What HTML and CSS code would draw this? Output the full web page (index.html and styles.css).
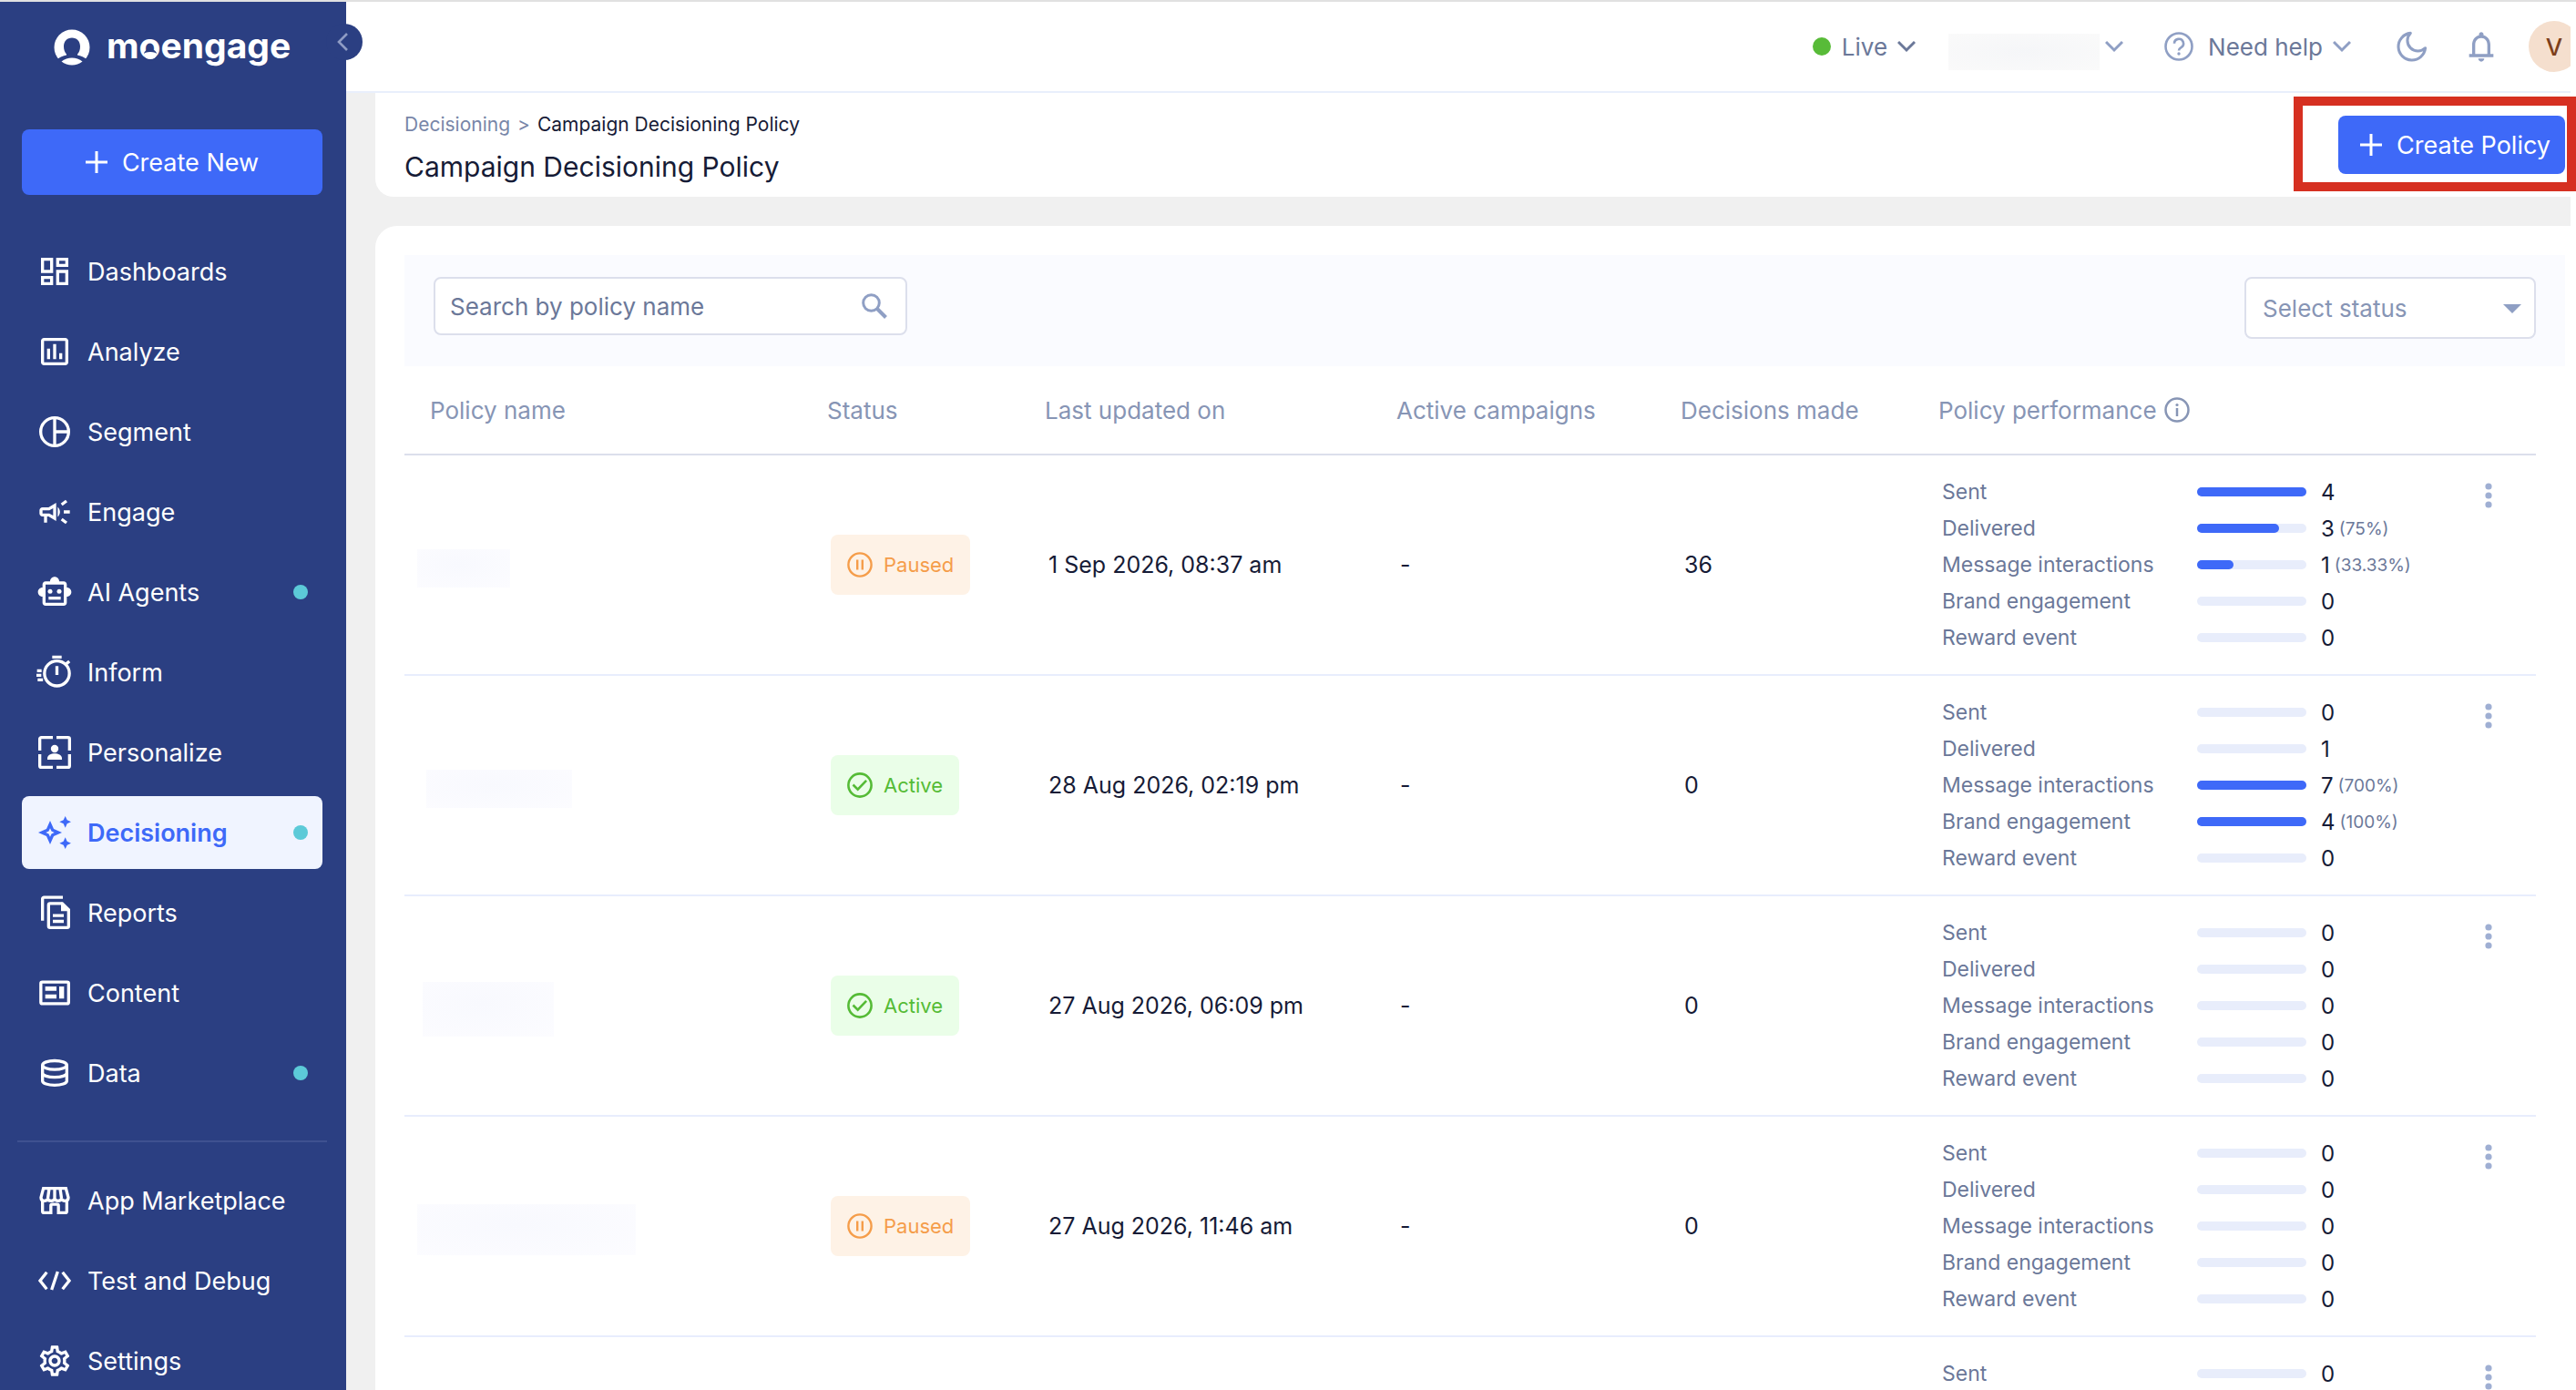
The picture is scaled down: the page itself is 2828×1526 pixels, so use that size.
FILE: index.html
```html
<!DOCTYPE html>
<html lang="en">
<head>
    <meta charset="UTF-8">
    <meta name="viewport" content="width=device-width, initial-scale=1.0">
    <title>Campaign Decisioning Policy</title>
    <link rel="stylesheet" href="styles.css">
</head>
<body>
    <svg class="sprite" aria-hidden="true">
        <symbol id="i-plus" viewBox="0 0 24 24"><path d="M12 0v24M0 12h24" fill="none" stroke="currentColor" stroke-width="3"/></symbol>
        <symbol id="i-chevron" viewBox="0 0 20 14"><path d="M1 2l9 9 9-9" fill="none" stroke="currentColor" stroke-width="3"/></symbol>
        <symbol id="i-paused" viewBox="0 0 28 28"><g fill="none" stroke="currentColor" stroke-width="2.4"><circle cx="14" cy="14" r="12.6"/><path d="M11.2 8.5v11M16.8 8.5v11"/></g></symbol>
        <symbol id="i-active" viewBox="0 0 28 28"><g fill="none" stroke="currentColor" stroke-width="2.6"><circle cx="14" cy="14" r="12.6"/><path d="M6.5 13.5l5.2 5.2 9.4-9.9"/></g></symbol>
        <symbol id="i-more" viewBox="0 0 8 28"><g fill="currentColor"><circle cx="4" cy="4" r="3.6"/><circle cx="4" cy="14" r="3.6"/><circle cx="4" cy="24" r="3.6"/></g></symbol>
    </svg>

    <div class="app">
        <aside class="sidebar">
            <a class="logo" href="#">
                <svg viewBox="0 0 40 40" aria-hidden="true">
                    <circle cx="20" cy="20" r="19.5" fill="#fff"/>
                    <path class="logo-cut" d="M20 9.5c5.6 0 9 4 9 9.5 0 3.8-1 6.3-3 8.5v1c4 .8 7.5 2.500 10 4.500l-5 7H9l-5-7c2.500-2 6-3.700 10-4.500v-1c-2-2.200-3-4.700-3-8.500 0-5.500 3.400-9.500 9-9.500z"/>
                    <path d="M8.500 35.500c6.500-5.300 16.500-5.300 23 0-6.500 5.300-16.500 5.300-23 0z" fill="#fff"/>
                </svg>
                <span class="logo-text">m<span class="logo-o">o</span>engage</span>
            </a>
            <button class="collapse" type="button" aria-label="Collapse menu">
                <svg viewBox="0 0 12 20" aria-hidden="true"><path d="M11 1l-9 9 9 9" fill="none" stroke="currentColor" stroke-width="2.600"/></svg>
            </button>
            <button class="btn create-new" type="button"><svg aria-hidden="true"><use href="#i-plus"/></svg>Create New</button>

            <nav class="menu">
                <a href="#">
                    <svg viewBox="0 0 24 24" aria-hidden="true"><path d="M19 5v2h-4V5h4M9 5v6H5V5h4m10 8v6h-4v-6h4M9 17v2H5v-2h4M21 3h-8v6h8V3zM11 3H3v10h8V3zm10 8h-8v10h8V11zm-10 4H3v6h8v-6z"/></svg>
                    <span>Dashboards</span>
                </a>
                <a href="#">
                    <svg viewBox="0 0 24 24" aria-hidden="true"><path d="M19 3H5c-1.100 0-2 .9-2 2v14c0 1.100.9 2 2 2h14c1.100 0 2-.9 2-2V5c0-1.100-.9-2-2-2zm0 16H5V5h14v14zM7 10h2v7H7zm4-3h2v10h-2zm4 6h2v4h-2z"/></svg>
                    <span>Analyze</span>
                </a>
                <a href="#">
                    <svg class="line" viewBox="0 0 24 24" aria-hidden="true"><circle cx="12" cy="12" r="9.200"/><path d="M12 3v18M12 12h9"/></svg>
                    <span>Segment</span>
                </a>
                <a href="#">
                    <svg viewBox="0 0 24 24" aria-hidden="true"><path d="M18 11v2h4v-2zM16 17.610c.96.710 2.210 1.650 3.200 2.390.4-.53.8-1.070 1.200-1.600-.99-.74-2.240-1.680-3.200-2.400-.4.540-.8 1.080-1.200 1.610zM20.400 5.600C20 5.070 19.600 4.530 19.200 4c-.99.740-2.240 1.680-3.200 2.400.4.530.8 1.070 1.200 1.600.96-.72 2.210-1.650 3.200-2.400zM4 9c-1.100 0-2 .9-2 2v2c0 1.100.9 2 2 2h1v4h2v-4h1l5 3V6L8 9H4zm5.030 1.710L11 9.530v4.940l-1.970-1.180-.48-.29H4v-2h4.550l.48-.29zM15.500 12c0-1.330-.58-2.530-1.500-3.350v6.690c.92-.81 1.500-2.010 1.500-3.340z"/></svg>
                    <span>Engage</span>
                </a>
                <a href="#">
                    <svg viewBox="0 0 24 24" aria-hidden="true"><path d="M20 9V7c0-1.100-.9-2-2-2h-3c0-1.660-1.340-3-3-3S9 3.340 9 5H6c-1.100 0-2 .9-2 2v2c-1.660 0-3 1.340-3 3s1.340 3 3 3v4c0 1.100.9 2 2 2h12c1.100 0 2-.9 2-2v-4c1.660 0 3-1.340 3-3s-1.340-3-3-3zm-2 10H6V7h12v12z"/><circle cx="9" cy="11.500" r="1.500"/><circle cx="15" cy="11.500" r="1.500"/><path d="M8 15h8v2H8z"/></svg>
                    <span>AI Agents</span>
                    <i class="dot"></i>
                </a>
                <a href="#">
                    <svg class="line" viewBox="0 0 24 24" aria-hidden="true"><circle cx="13.500" cy="12.800" r="8.200"/><path d="M10.400 2h6.200M13.500 8v5.800M19 7l2.700-2.200M.4 11h3M0 14h3.200M.8 17h3.500"/></svg>
                    <span>Inform</span>
                </a>
                <a href="#">
                    <svg class="line" viewBox="0 0 24 24" aria-hidden="true"><path d="M10.800 2.200H3.200a1 1 0 0 0-1 1v7.600M13.200 2.200h7.600a1 1 0 0 1 1 1v7.600M2.200 13.200v7.600a1 1 0 0 0 1 1h7.600M21.800 13.200v7.600a1 1 0 0 1-1 1h-7.600"/><g class="solid"><circle cx="12" cy="9.600" r="2.500"/><path d="M7.200 16.800v-1c0-1.900 2.500-3 4.800-3s4.800 1.100 4.800 3v1z"/></g></svg>
                    <span>Personalize</span>
                </a>
                <a class="current" href="#" aria-current="page">
                    <svg viewBox="0 0 24 24" aria-hidden="true"><path fill-rule="evenodd" d="M9 4.200l2.400 5.400 5.400 2.400-5.400 2.400L9 19.800l-2.400-5.400L1.200 12l5.400-2.400zM9 9.200l-.9 1.900-1.900.9 1.900.9.9 1.900.9-1.900 1.900-.9-1.900-.9z"/><path d="M19 1.200l1.200 2.600 2.600 1.200-2.600 1.200L19 8.800l-1.200-2.600L15.200 5l2.600-1.200zM19 15.200l1.200 2.600 2.600 1.200-2.600 1.200-1.200 2.600-1.200-2.600-2.600-1.200 2.600-1.200z"/></svg>
                    <span>Decisioning</span>
                    <i class="dot"></i>
                </a>
                <a href="#">
                    <svg class="line" viewBox="0 0 24 24" aria-hidden="true"><path d="M17.400 1.900H5a1 1 0 0 0-1 1v14.300M17 5.900H9a1 1 0 0 0-1 1v13.900a1 1 0 0 0 1 1h11.200a1 1 0 0 0 1-1V10zM10.800 13.900H18M10.800 17.700H18"/><path class="solid" d="M16.200 5v6H22z"/></svg>
                    <span>Reports</span>
                </a>
                <a href="#">
                    <svg class="line" viewBox="0 0 24 24" aria-hidden="true"><rect x="2.900" y="4.900" width="18.300" height="14.200" rx="1"/><path class="solid" d="M5.800 7.800h7.400v2.800H5.800zM5.800 13h7.400v2.800H5.800zM15 7.800h3.200v8H15z"/></svg>
                    <span>Content</span>
                </a>
                <a href="#">
                    <svg class="line" viewBox="0 0 24 24" aria-hidden="true"><ellipse cx="12" cy="6.800" rx="8" ry="2.900"/><path d="M4 6.800v10.400C4 18.800 7.600 20 12 20s8-1.200 8-2.800V6.800M4 12c0 1.600 3.600 2.800 8 2.800s8-1.200 8-2.800"/></svg>
                    <span>Data</span>
                    <i class="dot"></i>
                </a>
            </nav>

            <nav class="menu menu-secondary">
                <a href="#">
                    <svg class="line" viewBox="0 0 24 24" aria-hidden="true"><path d="M4 11.500V19a1 1 0 0 0 1 1h4.500v-4.500a1 1 0 0 1 1-1h3a1 1 0 0 1 1 1V20H19a1 1 0 0 0 1-1v-7.500M4.600 4h14.800l1.600 6c0 1.500-1 2.200-2.200 2.200S16.500 11.500 16.500 10.500c0 1-1 1.700-2.200 1.700S12 11.500 12 10.500c0 1-1 1.700-2.300 1.700S7.500 11.500 7.500 10.500c0 1-1 1.700-2.300 1.700S3 11.500 3 10zM8.400 4l-.9 6.500M12 4v6.500M15.600 4l.9 6.500"/></svg>
                    <span>App Marketplace</span>
                </a>
                <a href="#">
                    <svg class="line" viewBox="0 0 24 24" aria-hidden="true"><path d="M6.800 6.500L2.400 12l4.400 5.500M17.200 6.500l4.400 5.500-4.400 5.500M14 6l-4 12"/></svg>
                    <span>Test and Debug</span>
                </a>
                <a href="#">
                    <svg viewBox="0 0 24 24" aria-hidden="true"><path d="M19.430 12.980c.04-.32.07-.64.07-.98 0-.34-.03-.66-.07-.98l2.110-1.650c.19-.15.24-.42.12-.64l-2-3.460c-.09-.16-.26-.25-.44-.25-.06 0-.12.010-.17.030l-2.490 1c-.52-.4-1.080-.73-1.690-.98l-.38-2.650C14.460 2.180 14.250 2 14 2h-4c-.25 0-.46.180-.49.420l-.38 2.650c-.61.250-1.170.590-1.690.980l-2.490-1c-.06-.02-.12-.03-.18-.03-.17 0-.34.090-.43.250l-2 3.460c-.13.220-.07.490.12.640l2.110 1.650c-.04.320-.07.650-.07.980 0 .330.030.660.070.980l-2.110 1.650c-.19.150-.24.420-.12.640l2 3.460c.09.160.26.250.44.250.06 0 .12-.01.17-.03l2.490-1c.52.400 1.080.730 1.690.980l.38 2.650c.03.240.24.420.49.420h4c.25 0 .46-.18.49-.42l.38-2.650c.61-.25 1.170-.59 1.690-.98l2.490 1c.06.020.12.030.18.030.17 0 .34-.09.43-.25l2-3.460c.12-.22.07-.49-.12-.64l-2.110-1.650zm-1.980-1.710c.04.310.05.520.05.730 0 .210-.02.430-.05.730l-.14 1.130.89.700 1.080.840-.7 1.210-1.270-.51-1.040-.42-.9.680c-.43.320-.84.560-1.250.730l-1.060.430-.16 1.130-.2 1.350h-1.400l-.19-1.350-.16-1.130-1.060-.43c-.43-.18-.83-.41-1.230-.71l-.91-.7-1.060.430-1.270.510-.7-1.210 1.080-.84.890-.7-.14-1.130c-.03-.31-.05-.54-.05-.74s.02-.43.05-.73l.14-1.130-.89-.7-1.080-.84.700-1.210 1.270.510 1.040.420.9-.68c.43-.32.84-.56 1.250-.73l1.060-.43.160-1.130.200-1.350h1.390l.19 1.350.16 1.130 1.060.430c.43.180.83.410 1.230.710l.91.700 1.060-.43 1.270-.51.700 1.210-1.070.850-.89.700.14 1.130zM12 8c-2.210 0-4 1.790-4 4s1.790 4 4 4 4-1.790 4-4-1.790-4-4-4zm0 6c-1.100 0-2-.9-2-2s.9-2 2-2 2 .9 2 2-.9 2-2 2z"/></svg>
                    <span>Settings</span>
                </a>
            </nav>
        </aside>

        <div class="main">
            <header class="topbar">
                <button class="env" type="button"><i class="live-dot"></i>Live<svg class="chevron" aria-hidden="true"><use href="#i-chevron"/></svg></button>
                <button class="workspace" type="button" aria-label="Workspace"><i class="workspace-name"></i><svg class="chevron" aria-hidden="true"><use href="#i-chevron"/></svg></button>
                <button class="help" type="button">
                    <svg class="help-icon" viewBox="0 0 32 32" aria-hidden="true"><g fill="none" stroke="currentColor" stroke-width="2.600"><circle cx="16" cy="16" r="14.500"/><path d="M11 12.800a5 5 0 1 1 7.500 4.300c-1.700 1-2.500 1.700-2.500 3.400"/></g><circle cx="16" cy="24" r="1.700" fill="currentColor"/></svg>
                    Need help
                    <svg class="chevron" aria-hidden="true"><use href="#i-chevron"/></svg>
                </button>
                <button class="icon-btn" type="button" aria-label="Dark mode">
                    <svg viewBox="0 0 32 32" aria-hidden="true"><path d="M14.500 3A13.200 13.200 0 1 0 29 17.500 8.500 8.500 0 0 1 14.500 3z" fill="none" stroke="currentColor" stroke-width="2.700" stroke-linejoin="round"/></svg>
                </button>
                <button class="icon-btn bell" type="button" aria-label="Notifications">
                    <svg viewBox="0 0 24 24" aria-hidden="true"><path fill="currentColor" d="M12 22c1.100 0 2-.9 2-2h-4c0 1.100.9 2 2 2zm6-5v-6c0-3.070-1.630-5.640-4.500-6.320V4c0-.83-.67-1.500-1.500-1.500s-1.500.670-1.500 1.500v.680C7.640 5.360 6 7.920 6 11v6H4v2h16v-2zm-2 0H8v-6c0-2.480 1.510-4.500 4-4.500s4 2.020 4 4.500v6z"/></svg>
                </button>
                <button class="avatar" type="button">V</button>
            </header>

            <section class="page-head">
                <div class="page-title">
                    <nav class="breadcrumb"><a href="#">Decisioning</a><span class="sep">&gt;</span><span>Campaign Decisioning Policy</span></nav>
                    <h1>Campaign Decisioning Policy</h1>
                </div>
                <button class="btn create-policy" type="button"><svg aria-hidden="true"><use href="#i-plus"/></svg>Create Policy</button>
                <div class="highlight"></div>
            </section>

            <main class="card">
                <div class="filters">
                    <label class="search">
                        <input type="text" placeholder="Search by policy name" aria-label="Search by policy name">
                        <svg viewBox="0 0 28 28" aria-hidden="true"><g fill="none" stroke="currentColor" stroke-width="3"><circle cx="10.500" cy="10.500" r="8.800"/><path d="M17 17l9.500 9.500" stroke-width="4"/></g></svg>
                    </label>
                    <div class="select">
                        <select aria-label="Select status">
                            <option>Select status</option>
                        </select>
                    </div>
                </div>

                <table class="policies">
                    <colgroup>
                        <col class="col-name"><col class="col-status"><col class="col-updated"><col class="col-campaigns"><col class="col-decisions"><col><col class="col-actions">
                    </colgroup>
                    <thead>
                        <tr>
                            <th>Policy name</th>
                            <th>Status</th>
                            <th>Last updated on</th>
                            <th>Active campaigns</th>
                            <th>Decisions made</th>
                            <th colspan="2">
                                <div class="th-info">Policy performance
                                    <svg viewBox="0 0 28 28" aria-hidden="true"><circle cx="14" cy="14" r="12.500" fill="none" stroke="currentColor" stroke-width="2.500"/><path d="M14 12v9" stroke="currentColor" stroke-width="2.500"/><circle cx="14" cy="8.500" r="1.600" fill="currentColor"/></svg>
                                </div>
                            </th>
                        </tr>
                    </thead>
                    <tbody>
                        <tr>
                            <td><div class="masked masked-a"></div></td>
                            <td><span class="badge paused"><svg aria-hidden="true"><use href="#i-paused"/></svg>Paused</span></td>
                            <td>1 Sep 2026, 08:37 am</td>
                            <td>-</td>
                            <td>36</td>
                            <td class="performance">
                                <ul class="metrics">
                                    <li><span>Sent</span><div class="bar"><div style="width: 100%"></div></div><b>4</b></li>
                                    <li><span>Delivered</span><div class="bar"><div style="width: 75%"></div></div><b>3</b><small>(75%)</small></li>
                                    <li><span>Message interactions</span><div class="bar"><div style="width: 33.33%"></div></div><b>1</b><small>(33.33%)</small></li>
                                    <li><span>Brand engagement</span><div class="bar"></div><b>0</b></li>
                                    <li><span>Reward event</span><div class="bar"></div><b>0</b></li>
                                </ul>
                            </td>
                            <td class="actions"><button class="more" type="button" aria-label="More actions"><svg aria-hidden="true"><use href="#i-more"/></svg></button></td>
                        </tr>
                        <tr>
                            <td><div class="masked masked-b"></div></td>
                            <td><span class="badge active"><svg aria-hidden="true"><use href="#i-active"/></svg>Active</span></td>
                            <td>28 Aug 2026, 02:19 pm</td>
                            <td>-</td>
                            <td>0</td>
                            <td class="performance">
                                <ul class="metrics">
                                    <li><span>Sent</span><div class="bar"></div><b>0</b></li>
                                    <li><span>Delivered</span><div class="bar"></div><b>1</b></li>
                                    <li><span>Message interactions</span><div class="bar"><div style="width: 100%"></div></div><b>7</b><small>(700%)</small></li>
                                    <li><span>Brand engagement</span><div class="bar"><div style="width: 100%"></div></div><b>4</b><small>(100%)</small></li>
                                    <li><span>Reward event</span><div class="bar"></div><b>0</b></li>
                                </ul>
                            </td>
                            <td class="actions"><button class="more" type="button" aria-label="More actions"><svg aria-hidden="true"><use href="#i-more"/></svg></button></td>
                        </tr>
                        <tr>
                            <td><div class="masked masked-c"></div></td>
                            <td><span class="badge active"><svg aria-hidden="true"><use href="#i-active"/></svg>Active</span></td>
                            <td>27 Aug 2026, 06:09 pm</td>
                            <td>-</td>
                            <td>0</td>
                            <td class="performance">
                                <ul class="metrics">
                                    <li><span>Sent</span><div class="bar"></div><b>0</b></li>
                                    <li><span>Delivered</span><div class="bar"></div><b>0</b></li>
                                    <li><span>Message interactions</span><div class="bar"></div><b>0</b></li>
                                    <li><span>Brand engagement</span><div class="bar"></div><b>0</b></li>
                                    <li><span>Reward event</span><div class="bar"></div><b>0</b></li>
                                </ul>
                            </td>
                            <td class="actions"><button class="more" type="button" aria-label="More actions"><svg aria-hidden="true"><use href="#i-more"/></svg></button></td>
                        </tr>
                        <tr>
                            <td><div class="masked masked-d"></div></td>
                            <td><span class="badge paused"><svg aria-hidden="true"><use href="#i-paused"/></svg>Paused</span></td>
                            <td>27 Aug 2026, 11:46 am</td>
                            <td>-</td>
                            <td>0</td>
                            <td class="performance">
                                <ul class="metrics">
                                    <li><span>Sent</span><div class="bar"></div><b>0</b></li>
                                    <li><span>Delivered</span><div class="bar"></div><b>0</b></li>
                                    <li><span>Message interactions</span><div class="bar"></div><b>0</b></li>
                                    <li><span>Brand engagement</span><div class="bar"></div><b>0</b></li>
                                    <li><span>Reward event</span><div class="bar"></div><b>0</b></li>
                                </ul>
                            </td>
                            <td class="actions"><button class="more" type="button" aria-label="More actions"><svg aria-hidden="true"><use href="#i-more"/></svg></button></td>
                        </tr>
                        <tr>
                            <td colspan="5"></td>
                            <td class="performance">
                                <ul class="metrics">
                                    <li><span>Sent</span><div class="bar"></div><b>0</b></li>
                                </ul>
                            </td>
                            <td class="actions"><button class="more" type="button" aria-label="More actions"><svg aria-hidden="true"><use href="#i-more"/></svg></button></td>
                        </tr>
                    </tbody>
                </table>
            </main>
        </div>
    </div>
</body>
</html>
```

FILE: styles.css
```css
* {
    box-sizing: border-box;
}

body {
    margin: 0;
    font-family: Inter, "Liberation Sans", sans-serif;
    font-size: 26px;
    color: #161b36;
    background-color: #fff;
}

a {
    color: inherit;
    text-decoration: none;
}

button,
input,
select {
    font: inherit;
    color: inherit;
}

button {
    padding: 0;
    border: none;
    background: none;
    cursor: pointer;
}

.sprite {
    position: absolute;
    width: 0;
    height: 0;
}

.app {
    display: flex;
    height: 100vh;
    overflow: hidden;
    border-top: 2px solid #e1e1e1;
    padding-right: 6px;
}

/* Sidebar */
.sidebar {
    position: relative;
    z-index: 1;
    flex: none;
    width: 380px;
    padding: 28px 26px 0 24px;
    background-color: #2b3f82;
    color: #fff;
}

.logo {
    display: flex;
    align-items: center;
    gap: 18px;
    height: 44px;
    margin: 0 0 68px 35px;
    font-size: 39px;
    font-weight: 700;
}

.logo svg {
    width: 40px;
    height: 40px;
}

.logo-text {
    line-height: 44px;
    padding-bottom: 4px;
}

.logo-cut {
    fill: #2b3f82;
}

.logo-o {
    position: relative;
}

/* the "o" repeats the mark: a lens under a cut */
.logo-o::after {
    content: "";
    position: absolute;
    left: 5px;
    bottom: 8px;
    width: 14px;
    height: 8px;
    border-top: 3px solid #2b3f82;
    border-radius: 50%;
    background-color: #fff;
}

.collapse {
    position: absolute;
    top: 24px;
    right: -18px;
    width: 40px;
    height: 40px;
    border-radius: 50%;
    background-color: #2b3f82;
    color: #8f9cc4;
}

.collapse svg {
    display: block;
    width: 12px;
    height: 20px;
    margin-left: 12px;
}

.btn {
    display: flex;
    align-items: center;
    justify-content: center;
    gap: 16px;
    border-radius: 8px;
    background-color: #3e69f8;
    color: #fff;
    font-size: 27px;
}

.btn svg {
    width: 24px;
    height: 24px;
}

.create-new {
    width: 100%;
    height: 72px;
    margin-bottom: 44px;
}

.menu {
    display: flex;
    flex-direction: column;
    gap: 8px;
    font-size: 27px;
}

.menu a {
    display: flex;
    align-items: center;
    gap: 16px;
    height: 80px;
    padding: 0 16px;
    border-radius: 8px;
}

.menu svg {
    flex: none;
    width: 40px;
    height: 40px;
    fill: currentColor;
}

.menu .line {
    fill: none;
    stroke: currentColor;
    stroke-width: 2;
}

.menu .solid {
    fill: currentColor;
    stroke: none;
}

.menu .current {
    background-color: #f0f4ff;
    color: #3e69f8;
    font-weight: 600;
}

.dot {
    width: 16px;
    height: 16px;
    margin-left: auto;
    border-radius: 50%;
    background-color: #5ccad8;
}

.menu-secondary {
    margin: 34px -5px 0;
    padding: 24px 5px 0;
    border-top: 2px solid #3f5190;
}

/* Top bar */
.main {
    flex: 1;
    min-width: 0;
    background-color: #f0f0f0;
}

.topbar {
    display: flex;
    align-items: center;
    justify-content: flex-end;
    height: 100px;
    border-bottom: 2px solid #e9effc;
    background-color: #fff;
    color: #8f9fc4;
    overflow: hidden;
}

.topbar button {
    display: flex;
    align-items: center;
    flex: none;
}

.chevron {
    width: 20px;
    height: 14px;
    margin-left: 11px;
}

.topbar .env {
    margin-right: 36px;
    color: #6b7899;
}

.live-dot {
    width: 20px;
    height: 20px;
    margin-right: 12px;
    border-radius: 50%;
    background-color: #58bb38;
}

.topbar .workspace {
    margin-right: 45px;
}

.workspace-name {
    width: 166px;
    height: 40px;
    margin-top: 12px;
    background: radial-gradient(ellipse at center, #f5f6f8, #fafafa);
}

.workspace .chevron {
    margin-left: 6px;
}

.topbar .help {
    margin-right: 49px;
    color: #6b7899;
}

.help svg {
    color: #8f9fc4;
}

.help-icon {
    width: 32px;
    height: 32px;
    margin-right: 16px;
}

.icon-btn svg {
    width: 36px;
    height: 36px;
}

.bell {
    margin: 0 32px 0 38px;
}

.bell svg {
    width: 40px;
    height: 40px;
}

.topbar .avatar {
    justify-content: center;
    width: 56px;
    height: 56px;
    margin-right: -10px;
    border-radius: 50%;
    background-color: #f5dfce;
    color: #7d3f1b;
    font-weight: 500;
}

/* Page head */
.page-head {
    position: relative;
    display: flex;
    align-items: center;
    justify-content: space-between;
    height: 114px;
    margin-left: 32px;
    padding: 0 6px 0 32px;
    border-radius: 0 0 0 20px;
    background-color: #fff;
}

.page-title {
    padding-top: 8px;
}

.breadcrumb {
    display: flex;
    gap: 8px;
    font-size: 21px;
    line-height: 28px;
}

.breadcrumb a,
.breadcrumb .sep {
    color: #7886a8;
}

h1 {
    margin: 12px 0 0;
    font-size: 30px;
    font-weight: 400;
    line-height: 40px;
}

.create-policy {
    height: 64px;
    padding: 0 16px 0 24px;
}

.highlight {
    position: absolute;
    top: 4px;
    right: -6px;
    width: 310px;
    height: 104px;
    border: 10px solid #d63021;
    pointer-events: none;
}

/* Policy list */
.card {
    min-height: 100vh;
    margin: 32px 0 0 32px;
    padding: 32px 6px 0 32px;
    border-radius: 24px 0 0 0;
    background-color: #fff;
}

.filters {
    display: flex;
    align-items: flex-start;
    justify-content: space-between;
    height: 122px;
    padding: 24px 32px;
    background-color: #fafbff;
}

.search {
    display: flex;
    align-items: center;
    width: 520px;
    height: 64px;
    padding: 0 20px 0 16px;
    border: 2px solid #dcdfec;
    border-radius: 8px;
    background-color: #fff;
    color: #8f9fc4;
}

.search input {
    flex: 1;
    min-width: 0;
    padding: 0;
    border: none;
    outline: none;
    background: none;
}

.search input::placeholder {
    color: #6b7899;
    opacity: 1;
}

.search svg {
    width: 28px;
    height: 28px;
}

.select {
    position: relative;
    width: 320px;
}

.select select {
    appearance: none;
    width: 100%;
    height: 68px;
    padding: 0 18px;
    border: 2px solid #dcdfec;
    border-radius: 8px;
    background-color: #fff;
    color: #8795b5;
}

.select::after {
    content: "";
    position: absolute;
    top: 30px;
    right: 16px;
    border: 10px solid transparent;
    border-top-color: #8f9fc4;
    border-bottom: none;
}

.policies {
    width: calc(100% - 32px);
    border-collapse: separate;
    border-spacing: 0;
    table-layout: fixed;
}

.col-name { width: 436px; }
.col-status { width: 239px; }
.col-updated { width: 386px; }
.col-campaigns { width: 312px; }
.col-decisions { width: 283px; }
.col-actions { width: 104px; }

.policies th {
    height: 98px;
    padding: 0 0 0 28px;
    border-bottom: 2px solid #dcdfec;
    color: #8795b5;
    font-weight: 400;
    text-align: left;
}

.th-info {
    display: flex;
    align-items: center;
    gap: 8px;
}

.th-info svg {
    width: 28px;
    height: 28px;
}

.policies td {
    padding: 20px 0 20px 32px;
    border-bottom: 2px solid #e8edfd;
    font-size: 25px;
}

.policies td:first-child {
    padding: 24px 0 16px 14px;
}

.badge {
    display: inline-flex;
    align-items: center;
    gap: 12px;
    height: 66px;
    padding: 0 18px;
    border-radius: 8px;
    font-size: 22px;
}

.badge svg {
    width: 28px;
    height: 28px;
}

.paused {
    background-color: #fef2e6;
    color: #f59d4a;
}

.active {
    background-color: #eafee8;
    color: #55bb36;
}

.policies .performance,
.policies .actions {
    vertical-align: top;
}

.metrics {
    margin: 0;
    padding: 0;
    list-style: none;
}

.metrics li {
    display: flex;
    align-items: center;
    height: 40px;
    font-size: 23px;
}

.metrics span {
    width: 280px;
    color: #6b7899;
}

.bar {
    width: 120px;
    height: 10px;
    margin-right: 16px;
    border-radius: 5px;
    background-color: #e8edfb;
}

.bar div {
    height: 100%;
    border-radius: 5px;
    background-color: #3e69f8;
}

.metrics b {
    font-size: 24px;
    font-weight: 400;
}

.metrics small {
    margin-left: 5px;
    color: #6b7899;
    font-size: 19px;
}

.more {
    display: flex;
    padding: 10px 16px;
    color: #9fafd3;
}

.more svg {
    width: 8px;
    height: 28px;
}

.masked {
    background: radial-gradient(ellipse at 45% 40%, #f8f9fe, #fcfcff);
}

.masked-a {
    width: 102px;
    height: 42px;
}

.masked-b {
    width: 160px;
    height: 42px;
    margin-left: 10px;
}

.masked-c {
    width: 144px;
    height: 60px;
    margin-left: 6px;
}

.masked-d {
    width: 240px;
    height: 56px;
}
```
